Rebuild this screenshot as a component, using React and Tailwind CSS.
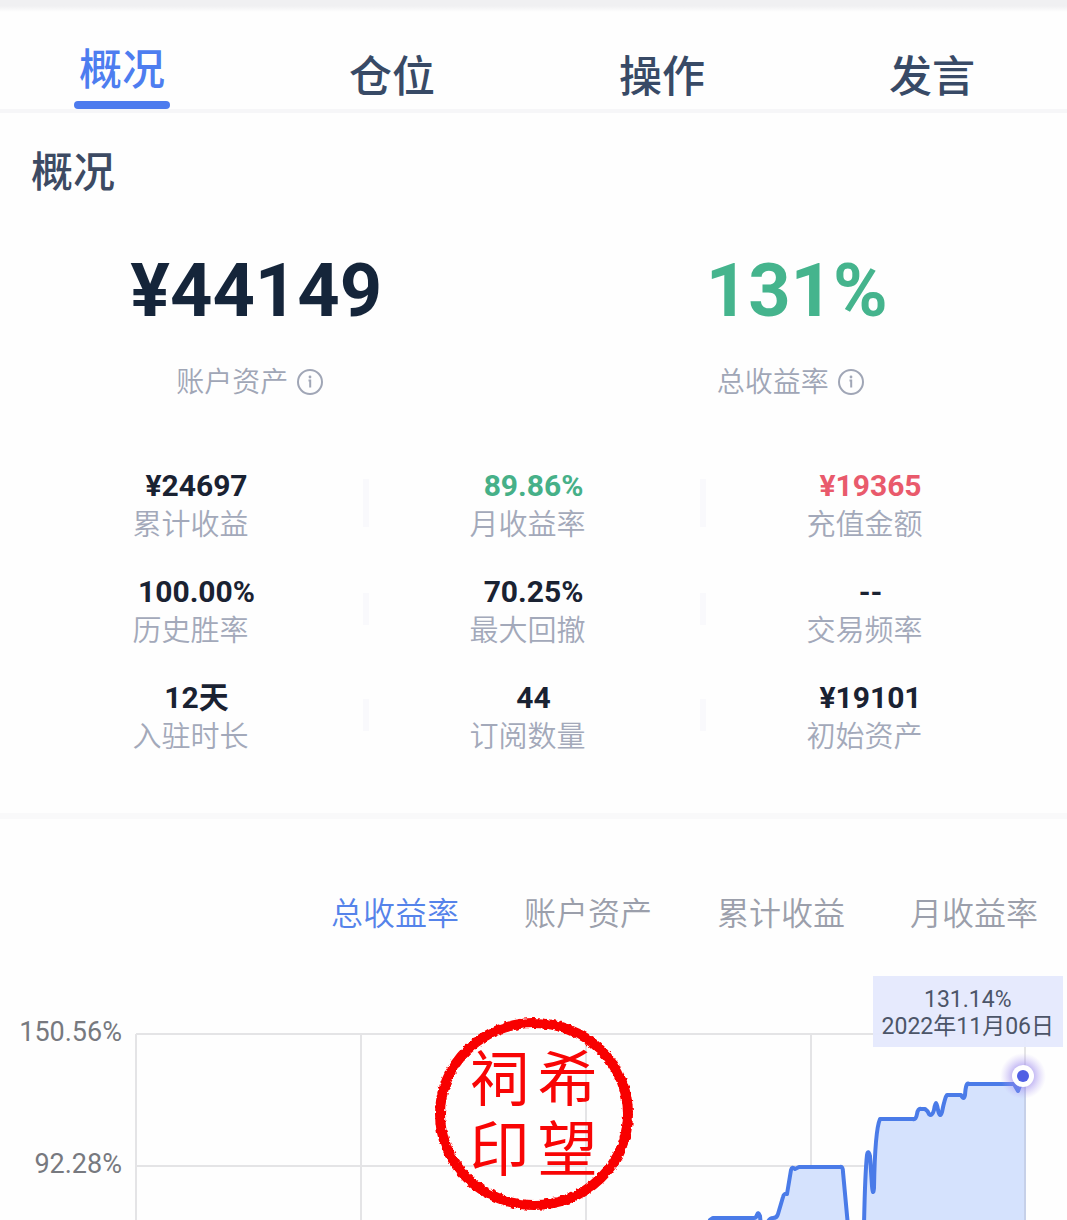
import { useState } from "react";
import clsx from "clsx";

const TABS = ["概况", "仓位", "操作", "发言"];
const CHART_TABS = ["总收益率", "账户资产", "累计收益", "月收益率"];

const STATS = [
    { label: "累计收益", value: "¥24697" },
    { label: "月收益率", value: "89.86%", color: "text-[#46b088]" },
    { label: "充值金额", value: "¥19365", color: "text-[#e95a6c]" },
    { label: "历史胜率", value: "100.00%" },
    { label: "最大回撤", value: "70.25%" },
    { label: "交易频率", value: "--" },
    { label: "入驻时长", value: "12天" },
    { label: "订阅数量", value: "44" },
    { label: "初始资产", value: "¥19101" },
];

// two visible pieces of the curve, the dip between them runs below the edge
const LINE_LEFT =
    "M578 256 L581 254 H622 Q624 254 625 251 Q626 247 628 252 L629 262 M635 260 Q637 254 641 254 Q645 254 646 250 L651 233 Q652 229 655 230 L659 206 Q660 202 663 205 L667 203 H708 Q711 202 711 208 L716 262";
const LINE_RIGHT =
    "M732 262 Q733 210 735 191 Q736 185 738 192 L740 222 Q741 233 742 224 Q743 166 748 155 H781 Q784 156 785 150 Q786 144 789 145 H793 Q796 147 797 150 Q800 153 802 146 Q804 132 806 146 Q808 155 810 148 Q813 133 815 131 H829 Q832 137 833 131 Q834 117 837 120 H882 L886 127 L890 116";

function InfoIcon() {
    return (
        <svg viewBox="0 0 28 28" className="w-7 h-7" fill="none" stroke="currentColor">
            <circle cx="14" cy="13" r="12" strokeWidth="2" />
            <path d="M12.5 11.5h1.7V18.5" strokeWidth="2" />
            <circle cx="14" cy="8" r="1.4" fill="currentColor" stroke="none" />
        </svg>
    );
}

function Summary({ value, label, color }) {
    return (
        <div className="flex flex-col items-center">
            <p className={clsx("text-[74px] leading-20 font-bold", color)}>{value}</p>
            <div className="flex items-center gap-2 mt-8 pr-3 text-[#a0a6b6]">
                <span className="text-[28px] leading-10 font-[350]">{label}</span>
                <button type="button" aria-label={`${label}说明`}>
                    <InfoIcon />
                </button>
            </div>
        </div>
    );
}

function Seal() {
    return (
        <div className="absolute left-1/2 top-[50px] -translate-x-1/2 w-[204px] h-[200px] text-[#f80505]">
            <svg viewBox="0 0 204 200" className="absolute inset-0 w-full h-full" fill="none">
                <filter id="rough" x="-5%" y="-5%" width="110%" height="110%">
                    <feTurbulence type="fractalNoise" baseFrequency="0.25" numOctaves="2" seed="4" />
                    <feDisplacementMap
                        in="SourceGraphic"
                        scale="4"
                        xChannelSelector="R"
                        yChannelSelector="G"
                    />
                </filter>
                <ellipse
                    cx="102"
                    cy="100"
                    rx="94"
                    ry="91"
                    stroke="currentColor"
                    strokeWidth="10"
                    filter="url(#rough)"
                />
            </svg>
            <p className="relative flex flex-col items-center pt-8 text-[60px] leading-[70px]">
                <span className="flex gap-2">
                    <span>祠</span>
                    <span>希</span>
                </span>
                <span className="flex gap-2">
                    <span>印</span>
                    <span>望</span>
                </span>
            </p>
        </div>
    );
}

function ProfitChart() {
    return (
        <div className="relative flex items-start mt-7">
            {/* y axis */}
            <div className="w-[132px] shrink-0 flex flex-col items-end gap-[100px] pt-[52px] pr-[10px] text-[27px] leading-8 text-[#77797f]">
                <span>150.56%</span>
                <span>92.28%</span>
            </div>

            <svg viewBox="0 0 935 256" className="flex-1 min-w-0" fill="none">
                <defs>
                    <radialGradient id="glow">
                        <stop offset="0.4" stopColor="#8f7bea" stopOpacity="0.6" />
                        <stop offset="1" stopColor="#b9a8f5" stopOpacity="0" />
                    </radialGradient>
                </defs>
                <path
                    d="M4 70H893 M4 202H893 M4 70V256 M229 70V256 M454 70V256 M679 70V256 M893 70V256"
                    stroke="#e4e4e6"
                    strokeWidth="2"
                />
                <path d={`${LINE_LEFT} H578 Z`} fill="#d5e2fd" />
                <path d={`${LINE_RIGHT} L893 120 V262 Z`} fill="#d5e2fd" />
                <path d="M893 120V256" stroke="#c6d0e8" strokeWidth="2" />
                <path
                    d={`${LINE_LEFT} ${LINE_RIGHT}`}
                    stroke="#4a7be8"
                    strokeWidth="4"
                    strokeLinejoin="round"
                    strokeLinecap="round"
                />
                <circle cx="891" cy="112" r="23" fill="url(#glow)" />
                <circle cx="891" cy="112" r="11" fill="#fff" />
                <circle cx="891" cy="112" r="6" fill="#5060e4" />
            </svg>

            {/* tooltip of the selected day */}
            <div className="absolute right-1 top-3 px-[9px] pt-[10px] pb-[7px] bg-[#e5e9fd]/95 text-center text-[23px] leading-[27px] text-[#4c5568]">
                <p>131.14%</p>
                <p>2022年11月06日</p>
            </div>

            <Seal />
        </div>
    );
}

export default function App() {
    const [tab, setTab] = useState("概况");
    const [chartTab, setChartTab] = useState("总收益率");

    return (
        <div className="bg-[#fefefe] overflow-hidden font-['Roboto','Noto_Sans_CJK_SC',sans-serif]">
            <div className="h-3 bg-linear-to-b from-[#f0f0f2] from-50% to-[#fefefe]" />

            {/* main tabs */}
            <nav className="h-[101px] flex items-end justify-between pl-[74px] pr-[87px] border-b-4 border-[#f6f6f8]">
                {TABS.map((name) => (
                    <button
                        key={name}
                        type="button"
                        onClick={() => setTab(name)}
                        className={clsx(
                            "w-24 text-[43px] leading-12 font-medium",
                            tab === name ? "text-[#4d7df0]" : "text-[#384a66] pb-2"
                        )}
                    >
                        {name}
                        {tab === name && (
                            <span className="block h-2 mt-[7px] rounded-full bg-[#4d7bee]" />
                        )}
                    </button>
                ))}
            </nav>

            <main>
                <h1 className="mt-9 pl-[31px] text-[42px] leading-12 font-medium text-[#3c4a63]">
                    概况
                </h1>

                <section className="grid grid-cols-2 -ml-3.5 mt-[54px]">
                    <Summary value="¥44149" label="账户资产" color="text-[#15253a]" />
                    <Summary value="131%" label="总收益率" color="text-[#45b48d]" />
                </section>

                <section className="grid grid-cols-3 gap-y-7 px-7 mt-[64px]">
                    {STATS.map((s, i) => (
                        <div key={s.label} className="relative flex flex-col items-center">
                            <p
                                className={clsx(
                                    "text-[30px] leading-[38px] font-bold",
                                    s.color || "text-[#1a2232]"
                                )}
                            >
                                {s.value}
                            </p>
                            <p className="pr-3 text-[29px] leading-10 font-[350] text-[#a3a9ba]">
                                {s.label}
                            </p>
                            {i % 3 !== 2 && (
                                <span
                                    className={clsx(
                                        "absolute -right-1 w-1.5 bg-[#f9f9fc]",
                                        i < 3 ? "top-3 h-12" : "top-5 h-8"
                                    )}
                                />
                            )}
                        </div>
                    ))}
                </section>

                <div className="h-1.5 mt-[56px] bg-[#f9f9fa]" />

                <section>
                    <div className="flex justify-end gap-[65px] pr-[29px] mt-[73px] text-[32px] leading-11 font-[350]">
                        {CHART_TABS.map((name) => (
                            <button
                                key={name}
                                type="button"
                                onClick={() => setChartTab(name)}
                                className={
                                    chartTab === name ? "text-[#5583ea]" : "text-[#9b9fab]"
                                }
                            >
                                {name}
                            </button>
                        ))}
                    </div>
                    <ProfitChart />
                </section>
            </main>
        </div>
    );
}
